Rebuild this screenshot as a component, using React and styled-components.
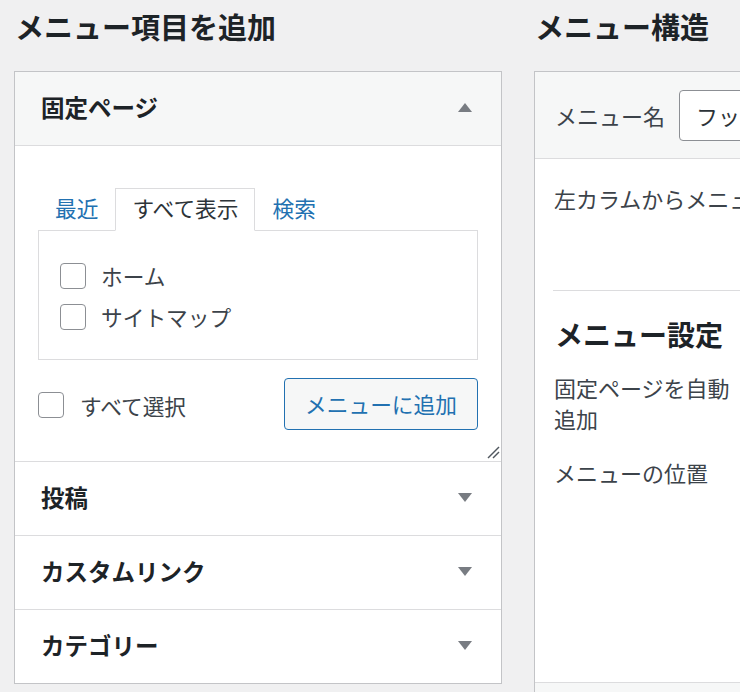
import React from "react";
import styled, { createGlobalStyle } from "styled-components";

const Global = createGlobalStyle`
  html, body { margin: 0; padding: 0; overflow: hidden; background: #f0f0f1; }
  body { font-family: "Noto Sans CJK JP", "Noto Sans", sans-serif; color: #3c434a; }
  * { box-sizing: border-box; }
`;

const Page = styled.div`
  display: flex;
  align-items: flex-start;
  gap: 32px;
  padding-left: 14px;
  width: 1400px;
  height: 692px;
`;

const Column = styled.div`
  flex: 0 0 ${(p) => p.$width}px;
  display: flex;
  flex-direction: column;
`;

const Heading = styled.h2`
  margin: 6px 0 25px;
  padding: 0 1px;
  font-size: 29px;
  line-height: 40px;
  font-weight: 700;
  color: #1d2327;
`;

const Accordion = styled.div`
  border: 1px solid #c3c4c7;
  background: #fff;
`;

const SectionHead = styled.div`
  height: 71px;
  display: flex;
  align-items: center;
  justify-content: space-between;
  padding: 0 29px 2px 26px;
  background: ${(p) => (p.$open ? "#f6f7f7" : "#fff")};
  border-top: ${(p) => (p.$first ? "none" : "1px solid #dcdcde")};
  border-bottom: ${(p) => (p.$open ? "1px solid #dcdcde" : "none")};
  box-sizing: content-box;
`;

const SectionTitle = styled.h3`
  margin: 0;
  font-size: 23.5px;
  font-weight: 700;
  color: #1d2327;
  line-height: 1;
`;

const Arrow = ({ up }) => (
  <svg width="14" height="9" viewBox="0 0 14 9" style={{ display: "block" }}>
    {up ? <polygon points="7,0 14,9 0,9" fill="#787c82" /> : <polygon points="0,0 14,0 7,9" fill="#787c82" />}
  </svg>
);

const SectionBody = styled.div`
  position: relative;
  padding: 42px 23px 31px;
`;

const Tabs = styled.div`
  display: flex;
  height: 43px;
  margin-bottom: -1px;
  position: relative;
  z-index: 1;
`;

const Tab = styled.div`
  padding: 0 16px 3px;
  display: flex;
  align-items: center;
  font-size: 21.7px;
  line-height: 1;
  color: ${(p) => (p.$active ? "#2c3338" : "#2271b1")};
  background: ${(p) => (p.$active ? "#fff" : "transparent")};
  border: 1px solid ${(p) => (p.$active ? "#dcdcde" : "transparent")};
  border-bottom-color: ${(p) => (p.$active ? "#fff" : "transparent")};
`;

const TabPanel = styled.div`
  border: 1px solid #dcdcde;
  height: 130px;
  padding: 24px 21px 20px;
`;

const CheckRow = styled.label`
  display: flex;
  align-items: center;
  gap: 15px;
  height: 41px;
  font-size: 21.7px;
  color: #3c434a;
`;

const Box = styled.span`
  width: 26px;
  height: 26px;
  border: 1px solid #8c8f94;
  border-radius: 4px;
  background: #fff;
  flex: 0 0 auto;
`;

const Actions = styled.div`
  margin-top: 18px;
  display: flex;
  align-items: center;
  justify-content: space-between;
  height: 52px;
`;

const SelectAll = styled(CheckRow)`
  gap: 16px;
  margin-top: 2px;
`;

const Button = styled.button`
  height: 52px;
  width: 194px;
  border: 1px solid #2271b1;
  border-radius: 4px;
  background: #f6f7f7;
  color: #2271b1;
  font-family: inherit;
  font-size: 21.7px;
  padding: 0 0 2px;
`;

const Resize = styled.svg`
  position: absolute;
  right: 1px;
  bottom: 2px;
`;

const StructPanel = styled.div`
  border: 1px solid #c3c4c7;
  border-right: none;
  background: #fff;
  display: flex;
  flex-direction: column;
`;

const StructHead = styled.div`
  height: 86px;
  display: flex;
  align-items: center;
  gap: 14px;
  padding: 0 20px;
  background: #f6f7f7;
  border-bottom: 1px solid #dcdcde;
  box-sizing: content-box;
  font-size: 22px;
`;

const NameInput = styled.div`
  height: 51px;
  width: 330px;
  border: 1px solid #8c8f94;
  border-radius: 4px;
  background: #fff;
  display: flex;
  align-items: center;
  padding: 0 16px;
  font-size: 22px;
  color: #2c3338;
`;

const StructBody = styled.div`
  height: 523px;
  padding: 24px 0 0 19px;
  font-size: 22px;
  line-height: 31px;
`;

const Intro = styled.p`
  margin: 0;
  white-space: nowrap;
`;

const Divider = styled.hr`
  margin: 76px 0 0 -1px;
  border: none;
  border-top: 1px solid #dcdcde;
`;

const SettingsTitle = styled.h3`
  margin: 23px 0 0;
  padding-left: 1px;
  font-size: 28px;
  line-height: 40px;
  font-weight: 700;
  color: #1d2327;
`;

const Settings = styled.div`
  margin-top: 18px;
  display: grid;
  grid-template-columns: 185px 1fr;
  row-gap: 23px;
`;

const SetLabel = styled.div`
  color: #3c434a;
`;

const StructFoot = styled.div`
  height: 40px;
  background: #f6f7f7;
  border-top: 1px solid #dcdcde;
`;

const closed = ["投稿", "カスタムリンク", "カテゴリー"];

export default function App() {
  return (
    <>
      <Global />
      <Page>
        <Column $width={488}>
          <Heading>メニュー項目を追加</Heading>
          <Accordion>
            <SectionHead $open $first>
              <SectionTitle>固定ページ</SectionTitle>
              <Arrow up />
            </SectionHead>
            <SectionBody>
              <Tabs>
                <Tab>最近</Tab>
                <Tab $active>すべて表示</Tab>
                <Tab>検索</Tab>
              </Tabs>
              <TabPanel>
                <CheckRow>
                  <Box />
                  ホーム
                </CheckRow>
                <CheckRow>
                  <Box />
                  サイトマップ
                </CheckRow>
              </TabPanel>
              <Actions>
                <SelectAll>
                  <Box />
                  すべて選択
                </SelectAll>
                <Button>メニューに追加</Button>
              </Actions>
              <Resize width="13" height="13" viewBox="0 0 13 13">
                <line x1="1" y1="12" x2="12" y2="1" stroke="#50575e" strokeWidth="1.4" />
                <line x1="6" y1="12" x2="12" y2="6" stroke="#50575e" strokeWidth="1.4" />
              </Resize>
            </SectionBody>
            {closed.map((t) => (
              <SectionHead key={t}>
                <SectionTitle>{t}</SectionTitle>
                <Arrow />
              </SectionHead>
            ))}
          </Accordion>
        </Column>
        <Column $width={800}>
          <Heading>メニュー構造</Heading>
          <StructPanel>
            <StructHead>
              <span>メニュー名</span>
              <NameInput>フッターメニュー</NameInput>
            </StructHead>
            <StructBody>
              <Intro>左カラムからメニュー項目を追加してください。</Intro>
              <Divider />
              <SettingsTitle>メニュー設定</SettingsTitle>
              <Settings>
                <SetLabel>固定ページを自動追加</SetLabel>
                <div />
                <SetLabel>メニューの位置</SetLabel>
                <div />
              </Settings>
            </StructBody>
            <StructFoot />
          </StructPanel>
        </Column>
      </Page>
    </>
  );
}
